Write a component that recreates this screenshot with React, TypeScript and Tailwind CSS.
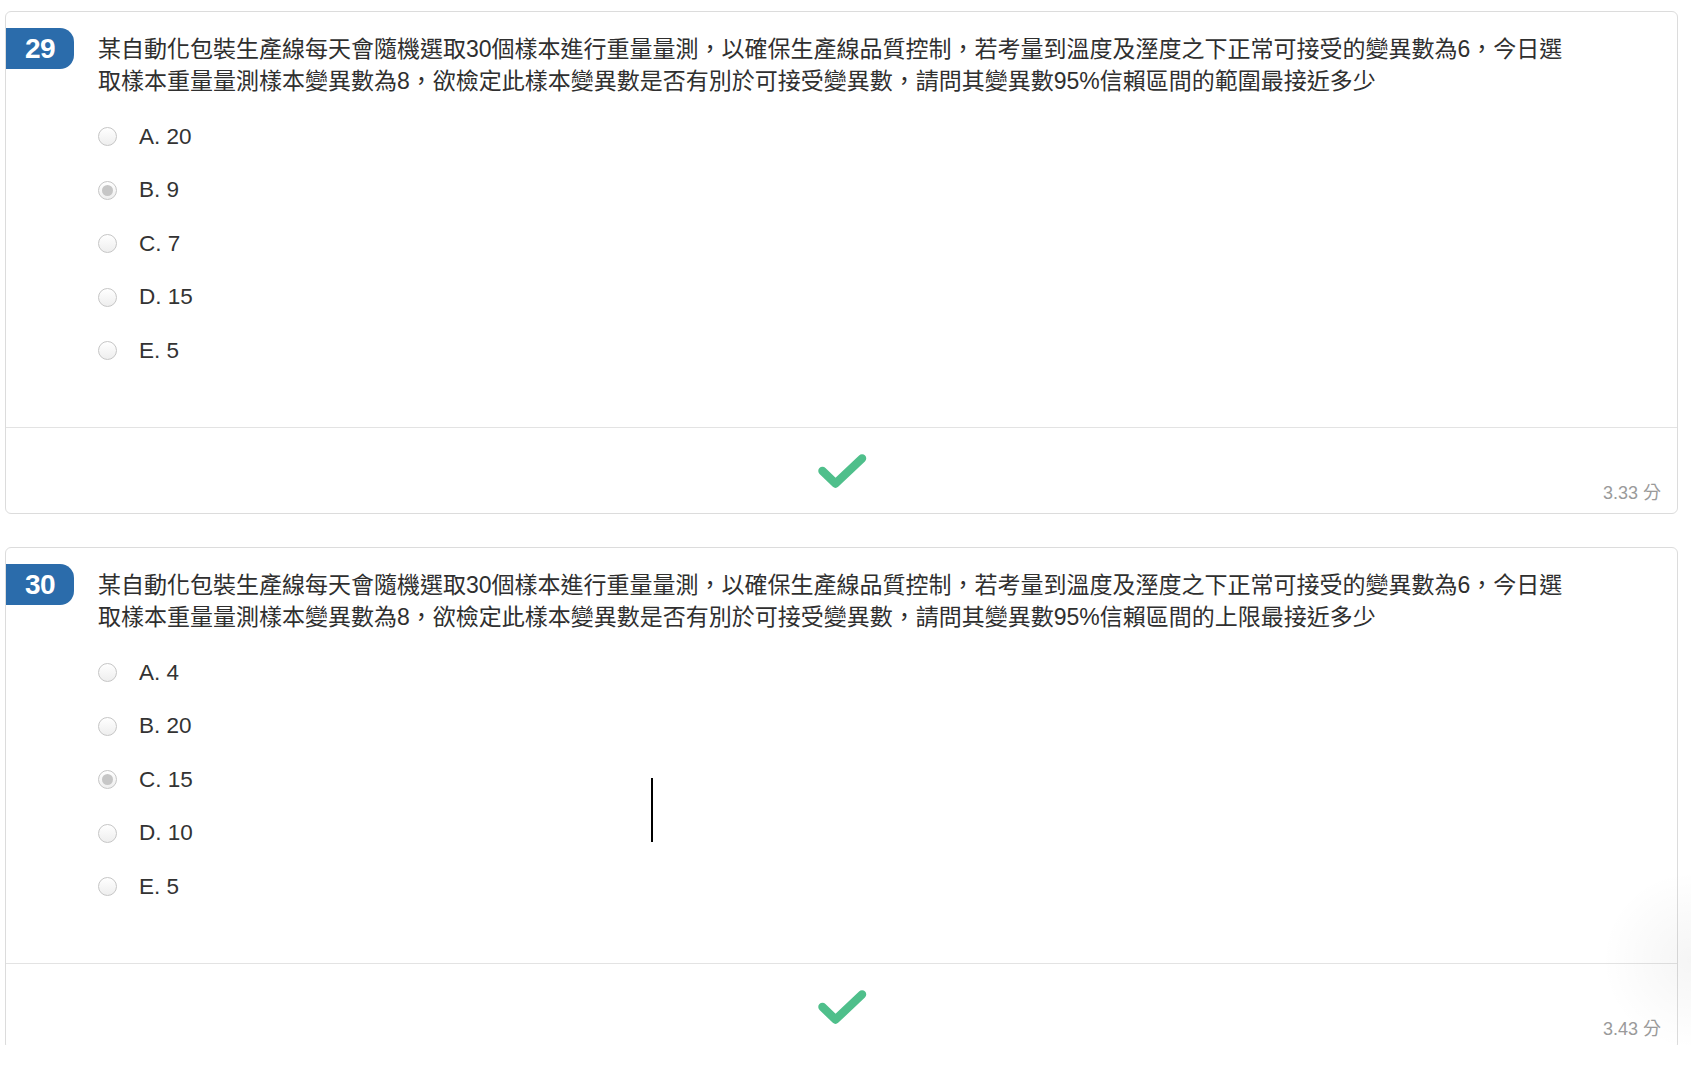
type Question = {
  no: number
  lines: string[]
  options: string[]
  picked: number
  score: string
}

const questions: Question[] = [
  {
    no: 29,
    lines: [
      '某自動化包裝生產線每天會隨機選取30個樣本進行重量量測，以確保生產線品質控制，若考量到溫度及溼度之下正常可接受的變異數為6，今日選',
      '取樣本重量量測樣本變異數為8，欲檢定此樣本變異數是否有別於可接受變異數，請問其變異數95%信賴區間的範圍最接近多少',
    ],
    options: ['A. 20', 'B. 9', 'C. 7', 'D. 15', 'E. 5'],
    picked: 1,
    score: '3.33 分',
  },
  {
    no: 30,
    lines: [
      '某自動化包裝生產線每天會隨機選取30個樣本進行重量量測，以確保生產線品質控制，若考量到溫度及溼度之下正常可接受的變異數為6，今日選',
      '取樣本重量量測樣本變異數為8，欲檢定此樣本變異數是否有別於可接受變異數，請問其變異數95%信賴區間的上限最接近多少',
    ],
    options: ['A. 4', 'B. 20', 'C. 15', 'D. 10', 'E. 5'],
    picked: 2,
    score: '3.43 分',
  },
]

const Radio = ({ checked }: { checked: boolean }) => (
  <div className="w-[19px] h-[19px] rounded-full border border-[#c6c6c6] bg-gradient-to-b from-white to-[#eeeeee] flex items-center justify-center shrink-0">
    {checked && <div className="w-[11px] h-[11px] rounded-full bg-[#c6c6c6]" />}
  </div>
)

const CheckMark = () => (
  <svg width="50" height="36" viewBox="0 0 50 36" fill="none">
    <path
      d="M5.5 18 L18.5 30.5 L45 5.5"
      stroke="#4fbf8b"
      strokeWidth="8.5"
      strokeLinecap="round"
      strokeLinejoin="round"
    />
  </svg>
)

const QuestionCard = ({ q }: { q: Question }) => {
  return (
    <div className="shrink-0 h-[503px] bg-white border border-[#dcdcdc] rounded-[6px] flex flex-col">
      <div className="flex items-start pt-[16px] h-[415px]">
        <div className="w-[68px] h-[41px] bg-[#2b6cab] rounded-r-[14px] flex items-center justify-center text-white text-[28px] font-bold tracking-[-0.5px] font-['Liberation_Sans',sans-serif]">
          {q.no}
        </div>
        <div className="ml-[24px] mt-[5px] flex flex-col">
          <div className="text-[23px] leading-[32px] text-[#2f2f2f] font-['Liberation_Sans','Noto_Sans_CJK_TC',sans-serif]">
            {q.lines.map((line, i) => (
              <div key={i} className="whitespace-nowrap">
                {line}
              </div>
            ))}
          </div>
          <div className="mt-[13px] flex flex-col">
            {q.options.map((opt, i) => (
              <div key={opt} className="h-[53.5px] flex items-center">
                <Radio checked={i === q.picked} />
                <span className="ml-[22px] text-[22.5px] text-[#333] font-['Liberation_Sans',sans-serif]">
                  {opt}
                </span>
              </div>
            ))}
          </div>
        </div>
      </div>
      <div className="relative flex-1 border-t border-[#e3e3e3] flex items-center justify-center">
        <CheckMark />
        <span className="absolute right-[16px] bottom-[6px] text-[18px] text-[#9a9a9a] font-['Liberation_Sans','Noto_Sans_CJK_TC',sans-serif]">
          {q.score}
        </span>
      </div>
    </div>
  )
}

export default function App() {
  return (
    <div className="relative w-[1691px] h-[1068px] bg-white overflow-hidden">
      <div className="h-[1045px] overflow-hidden pt-[11px] pl-[5px] pr-[13px] flex flex-col gap-[33px]">
        {questions.map((q) => (
          <QuestionCard key={q.no} q={q} />
        ))}
      </div>
      <div className="absolute right-0 top-[870px] w-[90px] h-[180px] bg-[radial-gradient(ellipse_at_right,rgba(0,0,0,0.04),transparent_70%)]" />
      <div className="absolute left-[651px] top-[778px] w-[1.5px] h-[64px] bg-black" />
    </div>
  )
}
